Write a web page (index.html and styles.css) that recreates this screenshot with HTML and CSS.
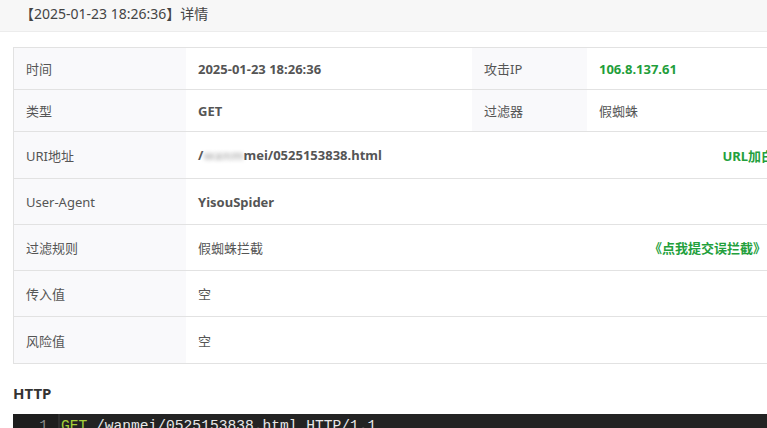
FILE: index.html
```html
<!DOCTYPE html>
<html lang="zh-CN">
<head>
    <meta charset="UTF-8">
    <meta name="viewport" content="width=device-width, initial-scale=1.0">
    <title>详情</title>
    <link rel="stylesheet" href="styles.css">
</head>
<body>
    <!-- 标题 -->
    <div class="page-head">【2025-01-23 18:26:36】详情</div>

    <div class="content">
        <!-- 详情表 -->
        <table class="detail">
            <tr class="row-short">
                <td class="label">时间</td>
                <td class="value strong">2025-01-23 18:26:36</td>
                <td class="label label-mid">攻击IP</td>
                <td class="value strong green">106.8.137.61</td>
            </tr>
            <tr class="row-short">
                <td class="label">类型</td>
                <td class="value strong">GET</td>
                <td class="label label-mid">过滤器</td>
                <td class="value">假蜘蛛</td>
            </tr>
            <tr class="row-tall">
                <td class="label">URI地址</td>
                <td class="value strong" colspan="3">
                    <span class="uri">/<span class="blur">wanm</span>mei/0525153838.html</span>
                    <a class="action">URL加白名单</a>
                </td>
            </tr>
            <tr>
                <td class="label">User-Agent</td>
                <td class="value strong" colspan="3">YisouSpider</td>
            </tr>
            <tr>
                <td class="label">过滤规则</td>
                <td class="value" colspan="3">
                    假蜘蛛拦截
                    <a class="action action-report">《点我提交误拦截》</a>
                </td>
            </tr>
            <tr>
                <td class="label">传入值</td>
                <td class="value" colspan="3">空</td>
            </tr>
            <tr class="row-tall">
                <td class="label">风险值</td>
                <td class="value" colspan="3">空</td>
            </tr>
        </table>

        <h3 class="section-title">HTTP</h3>
        <div class="code">
            <div class="code-line"><span class="ln">1</span><span class="src"><span class="kw">GET</span> /wanmei/0525153838.html HTTP/1.1</span></div>
        </div>
    </div>
</body>
</html>
```

FILE: styles.css
```css
html, body { margin: 0; padding: 0; overflow: hidden; background: #fff; }
body { font-family: "Noto Sans", "Noto Sans CJK SC", sans-serif; font-size: 13px; color: #555; width: 767px; height: 428px; }
.page-head { height: 32px; line-height: 27px; padding-left: 20px; background: #f7f7f7; border-bottom: 1px solid #ececec; font-size: 14px; color: #444; box-sizing: border-box; }
.content { padding: 15px 0 0 13px; width: 820px; }
.detail { width: 800px; border-collapse: collapse; border: 1px solid #e2e2e2; }
.detail td { border-top: 1px solid #e2e2e2; padding: 0 12px; height: 45px; vertical-align: middle; }
.detail tr.row-short td { height: 41px; }
.detail tr.row-tall td { height: 46px; }
.detail .label { width: 148px; background: #f9f9fb; color: #555; }
.detail .label-mid { width: 91px; }
.detail tr.row-short .value:nth-child(2) { width: 262px; }
.value { color: #555; }
.strong { font-weight: bold; color: #555; }
.green { color: #1f9e3b; }
.uri .blur { color: transparent; text-shadow: 0 0 4px #bbb; }
.action { float: right; color: #23a03c; font-weight: bold; cursor: pointer; }
.action-report { margin-right: 34px; }
.section-title { margin: 19px 0 0; font-size: 15px; font-weight: bold; color: #333; line-height: 20px; }
.code { margin-top: 11px; background: #232323; width: 780px; height: 22px; overflow: hidden; }
.code-line { display: flex; font-family: "Liberation Mono", "DejaVu Sans Mono", monospace; font-size: 14.6px; line-height: 20px; padding-top: 2px; }
.ln { width: 35px; padding-right: 10px; text-align: right; color: #8a8a8a; background: #1e1e1e; border-right: 2px solid #2e2e2e; margin-top: -2px; padding-top: 2px; }
.src { color: #e8e8e8; white-space: pre; padding-left: 1px; }
.kw { color: #a6cf3a; }
```
